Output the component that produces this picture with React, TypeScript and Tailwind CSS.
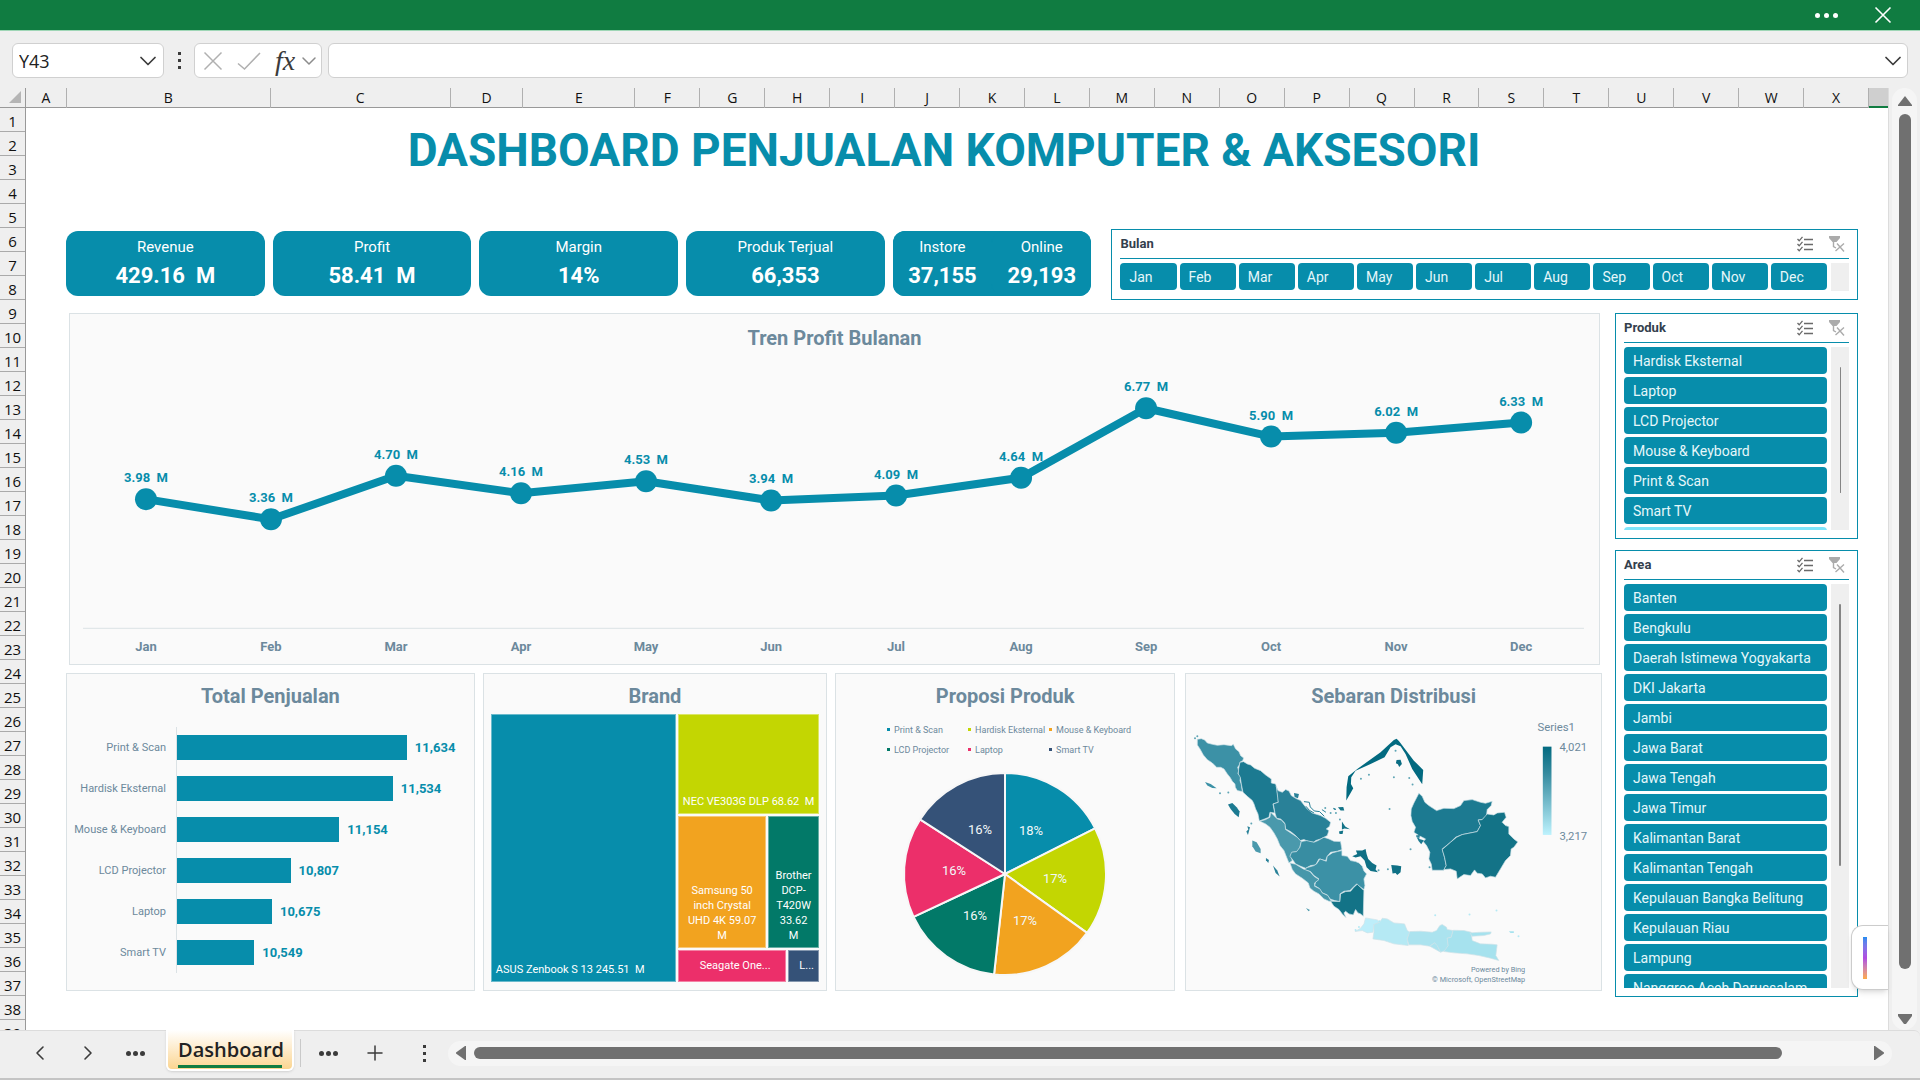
import { useState } from "react";
import { ChevronDown, ChevronLeft, ChevronRight, Plus } from "lucide-react";
import { clsx } from "clsx";

const columns = "ABCDEFGHIJKLMNOPQRSTUVWX".split("");
const rows = Array.from({ length: 39 }, (_, i) => i + 1);

const kpis = [
  { label: "Revenue", value: "429.16  M" },
  { label: "Profit", value: "58.41  M" },
  { label: "Margin", value: "14%" },
  { label: "Produk Terjual", value: "66,353" },
];

const months = ["Jan", "Feb", "Mar", "Apr", "May", "Jun", "Jul", "Aug", "Sep", "Oct", "Nov", "Dec"];
const profit = [3.98, 3.36, 4.7, 4.16, 4.53, 3.94, 4.09, 4.64, 6.77, 5.9, 6.02, 6.33];

const products = ["Hardisk Eksternal", "Laptop", "LCD Projector", "Mouse & Keyboard", "Print & Scan", "Smart TV"];

const areas = [
  "Banten",
  "Bengkulu",
  "Daerah Istimewa Yogyakarta",
  "DKI Jakarta",
  "Jambi",
  "Jawa Barat",
  "Jawa Tengah",
  "Jawa Timur",
  "Kalimantan Barat",
  "Kalimantan Tengah",
  "Kepulauan Bangka Belitung",
  "Kepulauan Riau",
  "Lampung",
  "Nanggroe Aceh Darussalam",
];

const sales = [
  { name: "Print & Scan", value: 11634, color: "#078dab", lx: 1031, ly: 831 },
  { name: "Hardisk Eksternal", value: 11534, color: "#c3d602", lx: 1055, ly: 879 },
  { name: "Mouse & Keyboard", value: 11154, color: "#f2a31f", lx: 1025, ly: 921 },
  { name: "LCD Projector", value: 10807, color: "#027968", lx: 975, ly: 916 },
  { name: "Laptop", value: 10675, color: "#ec2f6a", lx: 954, ly: 871 },
  { name: "Smart TV", value: 10549, color: "#355278", lx: 980, ly: 830 },
];

const provinces = [
  { fill: "#3c91a6", points: "50,241 62,239 72,243 80,252 95,256 110,259 130,257 152,260 158,256 165,270 175,278 180,290 189,297 186,305 178,310 176,318 171,325 174,335 172,345 180,352 178,365 182,375 185,398 170,395 164,385 163,375 155,367 148,355 140,345 130,330 120,325 108,325 95,312 80,302 68,288 58,270 50,258" },
  { fill: "#1c7a91", points: "189,308 200,315 210,318 222,328 240,335 255,348 272,360 272,372 285,375 289,390 292,415 293,430 277,435 280,450 282,462 268,460 265,475 252,480 236,486 232,465 225,450 220,435 215,425 200,412 187,400 182,375 179,355 173,345 174,330 178,310" },
  { fill: "#298198", points: "287,382 292,395 305,400 315,392 325,396 332,410 345,418 360,425 370,438 380,450 395,462 420,470 435,478 450,490 447,502 437,510 445,515 440,530 430,535 420,540 405,545 400,550 385,548 370,542 358,545 345,530 330,518 315,510 312,492 300,480 288,478 283,462 280,445 278,435 293,430" },
  { fill: "#4a99ac", points: "238,487 255,482 268,475 270,460 280,470 290,480 302,483 313,495 315,512 335,525 350,535 362,548 358,565 350,578 335,580 330,590 335,605 325,612 318,595 310,575 298,560 290,540 280,522 268,505 255,495" },
  { fill: "#388da2", points: "362,548 378,545 400,550 412,545 430,535 445,540 460,547 480,548 484,572 470,577 450,580 440,592 435,605 415,600 405,618 390,620 375,628 360,622 345,615 338,605 328,592 333,580 348,578 358,565" },
  { fill: "#3c91a6", points: "484,575 484,590 500,592 510,605 525,608 535,612 545,622 550,636 558,645 550,660 553,680 550,692 540,685 528,675 518,685 508,695 490,697 478,705 478,728 462,725 448,720 440,708 425,702 415,688 402,680 405,670 415,660 400,650 390,638 370,632 380,626 400,620 408,615 418,600 437,607 440,592 455,582 470,578" },
  { fill: "#4797aa", points: "328,612 345,616 368,630 388,638 400,652 415,662 402,672 402,682 418,690 425,702 442,710 450,724 462,728 445,727 430,720 415,705 400,697 388,687 383,672 365,658 345,645 335,632" },
  { fill: "#137387", points: "450,727 478,728 480,705 495,698 510,697 520,685 530,676 545,690 550,695 548,772 540,765 532,762 525,752 518,768 505,765 495,757 490,762 496,776 485,765 475,752 460,742" },
  { fill: "#1c7a91", points: "715,403 725,412 733,430 745,440 768,455 790,448 820,449 840,440 850,425 875,422 900,430 915,433 935,427 932,440 920,452 918,470 905,482 893,483 900,500 890,518 865,523 845,527 825,535 810,550 785,570 792,595 797,620 790,634 755,634 752,615 745,600 748,580 738,560 728,548 735,540 715,530 700,520 705,505 695,488 691,470 692,450 700,432" },
  { fill: "#137387", points: "920,465 940,468 950,462 972,460 977,475 965,490 975,500 985,503 985,525 1000,540 1012,549 1000,565 992,570 990,590 975,605 960,630 945,655 930,652 915,657 905,645 890,643 882,633 870,650 850,647 830,660 827,637 810,630 790,632 797,620 792,595 785,572 810,550 828,535 845,527 865,523 890,518 900,500 893,483 905,482" },
  { fill: "#bdeefa", points: "555,777 590,783 598,790 580,797 577,820 560,822 545,815 523,818 540,808 550,795" },
  { fill: "#b5e9f4", points: "598,790 605,778 620,780 640,792 672,795 680,815 688,820 680,838 683,860 640,855 610,845 577,840 580,820 580,797" },
  { fill: "#abe3ef", points: "688,818 720,817 755,820 768,815 778,800 785,797 798,805 800,812 818,815 812,835 800,838 803,860 795,875 780,880 762,852 748,862 720,858 685,858 680,840" },
  { fill: "#abe3ef", points: "748,862 762,852 770,860 780,880" },
  { fill: "#a6e2ee", points: "818,814 850,815 872,820 875,845 900,855 935,856 950,858 946,890 955,905 930,898 895,890 860,885 820,882 790,878 803,860 800,838 812,835" },
  { fill: "#a6e2ee", points: "868,822 900,820 932,819 930,825 910,830 875,832" },
];

const islands = [
  { fill: "#3c91a6", points: "73,369 90,375 108,388 95,387 80,380" },
  { fill: "#1c7a91", points: "142,437 155,432 168,445 177,458 174,475 162,465 150,450" },
  { fill: "#4a99ac", points: "215,545 228,550 240,570 240,583 225,578 215,562" },
  { fill: "#298198", points: "200,502 208,505 202,528 197,518 203,512" },
  { fill: "#298198", points: "256,597 265,603 263,612 256,604" },
  { fill: "#298198", points: "277,620 290,635 297,653 285,642" },
  { fill: "#4797aa", points: "376,747 388,753 384,757" },
  { fill: "#298198", points: "340,402 355,405 352,418 342,414" },
  { fill: "#137387", points: "472,445 488,444 491,455 480,455" },
  { fill: "#137387", points: "475,518 488,515 486,525 477,525" },
  { fill: "#137387", points: "484,488 494,503 508,511 492,509 484,512" },
  { fill: "#026a80", points: "497,425 498,385 503,352 530,330 600,280 640,243 648,239 655,246 700,305 728,333 725,376 695,330 675,285 660,262 645,256 630,265 612,295 570,315 525,335 512,355 511,375 518,388 510,402" },
  { fill: "#0b6d83", points: "648,303 660,302 664,315 656,324 652,316 646,313" },
  { fill: "#0f7085", points: "515,592 530,585 526,575 545,575 555,570 558,585 563,600 575,612 588,620 585,632 592,640 570,636 558,625 552,605 540,592 525,596" },
  { fill: "#0f7085", points: "632,618 650,620 662,622 660,640 650,648 645,642 636,644 634,630" },
  { fill: "#1c7a91", points: "706,530 718,528 716,540 730,544 722,556 714,546" },
  { fill: "#a6e2ee", points: "985,817 1000,817 1000,822 990,822" },
];

const specks = [
  [50, 232], [43, 238], [143, 401], [118, 403], [212, 494], [541, 359], [565, 347], [686, 357], [696, 377], [640, 355],
  [645, 275], [627, 450], [690, 571], [622, 631], [594, 634], [462, 450], [466, 462], [478, 482], [434, 447], [450, 462],
  [535, 804], [597, 787], [525, 813], [764, 769], [867, 767], [948, 755], [1014, 832], [747, 625], [712, 536],
];

const slicePath = (from: number, to: number) => {
  const total = sales.reduce((a, s) => a + s.value, 0);
  const at = (v: number) => {
    const t = (v / total) * Math.PI * 2;
    return `${1005 + 101 * Math.sin(t)} ${874 - 101 * Math.cos(t)}`;
  };
  return `M1005 874 L${at(from)} A101 101 0 0 1 ${at(to)} Z`;
};

function Dots({ vertical = false, wide = false }: { vertical?: boolean; wide?: boolean }) {
  return (
    <span
      className={clsx("flex items-center justify-center", vertical ? "flex-col gap-1" : wide ? "gap-1" : "gap-0.5")}
    >
      {[0, 1, 2].map((i) => (
        <span key={i} className={clsx("bg-current", vertical ? "size-[3px]" : "size-[5px] rounded-full")} />
      ))}
    </span>
  );
}

function TitleBar() {
  return (
    <header className="flex h-[31px] shrink-0 items-center justify-end gap-8 border-b border-[#9fd6b6] bg-[#107c41] pr-7 text-white">
      <button aria-label="More options" className="w-8">
        <Dots wide />
      </button>
      <button aria-label="Close">
        <svg className="size-[18px]" viewBox="0 0 18 18" stroke="currentColor" strokeWidth="1.6">
          <path d="M1.5 1.5 16.5 16.5M16.5 1.5 1.5 16.5" />
        </svg>
      </button>
    </header>
  );
}

function FormulaBar() {
  const [cell, setCell] = useState("Y43");
  const box = "flex h-[35px] items-center rounded-md border border-[#d0d0d0] bg-white";
  return (
    <div className="flex h-[57px] shrink-0 gap-1.5 pt-3 pr-3 pl-3 text-[#3b3b3b]">
      <div className={clsx(box, "w-[152px] pr-px pl-1.5")}>
        <input
          aria-label="Name box"
          value={cell}
          onChange={(e) => setCell(e.target.value)}
          className="w-full min-w-0 bg-transparent font-['Open_Sans',sans-serif] text-lg text-[#222] outline-none"
        />
        <button aria-label="Show names">
          <ChevronDown className="size-7" strokeWidth={1.5} />
        </button>
      </div>
      <div className="flex h-[35px] w-[18px] items-center justify-center">
        <Dots vertical />
      </div>
      <div className={clsx(box, "w-[128px] pl-2 text-[#b0b0b0]")}>
        <button aria-label="Cancel">
          <svg className="size-5" viewBox="0 0 20 20" stroke="currentColor" strokeWidth="1.5">
            <path d="M1.5 1.5 18.5 18.5M18.5 1.5 1.5 18.5" />
          </svg>
        </button>
        <button aria-label="Enter" className="ml-3.5">
          <svg className="h-5 w-6" viewBox="0 0 24 20" fill="none" stroke="currentColor" strokeWidth="1.5">
            <path d="M1 12.5 7.5 18 23 2" />
          </svg>
        </button>
        <button
          aria-label="Insert function"
          className="ml-3.5 font-['Liberation_Serif',serif] text-[28px] leading-7 text-[#3b3b3b] italic"
        >
          fx
        </button>
        <ChevronDown className="ml-0.5 size-6 shrink-0 text-[#8c8c8c]" strokeWidth={1.5} />
      </div>
      <div className={clsx(box, "flex-1")}>
        <input aria-label="Formula" className="w-full bg-transparent px-2 outline-none" />
        <button aria-label="Expand formula bar">
          <ChevronDown className="size-7" strokeWidth={1.5} />
        </button>
      </div>
    </div>
  );
}

function ColumnHeaders() {
  return (
    <div className="flex h-5 shrink-0 border-b border-[#999] font-['Open_Sans',sans-serif] text-sm text-[#111]">
      <div className="flex w-[26px] items-end justify-end border-r border-[#999] pr-1 pb-1">
        <svg className="size-3" viewBox="0 0 12 12" fill="#b5b5b5">
          <path d="M12 0v12H0z" />
        </svg>
      </div>
      <div className="grid flex-1 grid-cols-[41fr_204fr_180fr_73fr_112fr_repeat(19,65fr)_19fr]">
        {columns.map((c) => (
          <div key={c} className="border-r border-[#b0b0b0] text-center leading-5">
            {c}
          </div>
        ))}
        <div className="border-b-2 border-[#107c41] bg-[#cfcfcf]" />
      </div>
    </div>
  );
}

function RowHeaders() {
  return (
    <div className="w-[26px] shrink-0 border-r border-[#999] font-['Open_Sans',sans-serif] text-[15px] text-[#111]">
      {rows.map((r) => (
        <div key={r} className="h-6 border-b border-[#aaa] pt-px text-center leading-6">
          {r}
        </div>
      ))}
    </div>
  );
}

function KpiCard({ label, value }: { label: string; value: string }) {
  return (
    <div className="flex flex-1 flex-col items-center rounded-xl bg-[#078dab] pt-1.5 text-white">
      <span className="text-[15px] leading-5">{label}</span>
      <span className="mt-[5px] text-[22px] leading-7 font-bold whitespace-pre">{value}</span>
    </div>
  );
}

function Slicer({
  title,
  items,
  horizontal = false,
  partial = false,
  thumb,
  className,
}: {
  title: string;
  items: string[];
  horizontal?: boolean;
  partial?: boolean;
  thumb?: string;
  className?: string;
}) {
  return (
    <section className={clsx("flex min-w-0 flex-col border border-[#078dab] bg-white px-2 pb-2", className)}>
      <div className="flex h-[29px] shrink-0 items-center border-b border-[#078dab]">
        <h2 className="flex-1 text-[13px] font-bold text-[#33404d]">{title}</h2>
        <button aria-label={`Multi-select ${title}`} className="mr-4">
          <svg className="size-4" viewBox="0 0 16 16" fill="none" stroke="#6a6a6a" strokeWidth="1.3">
            <path d="M7 3.5h9M7 8.5h9M7 13.5h9M.5 3 2.2 4.8 5.5.8M.5 8 2.2 9.8 5.5 5.8M.5 13l1.700 1.800L5.500 10.800" />
          </svg>
        </button>
        <button aria-label={`Clear filter ${title}`} className="mr-1">
          <svg className="size-4" viewBox="0 0 16 16" fill="none" stroke="#ababab" strokeWidth="1.4">
            <path d="M0 0h11v2L7.5 6H3.5L0 2z" fill="#ababab" stroke="none" />
            <path d="M4.5 5v5.5l2.5 1.500M6.500 15 15 7.500M8 7.500l7 8" />
          </svg>
        </button>
      </div>
      <div className="mt-1 flex min-h-0 flex-1 gap-1">
        <div className={clsx("flex min-w-0 flex-1 gap-[3px] overflow-hidden", !horizontal && "flex-col")}>
          {items.map((item) => (
            <button
              key={item}
              className={clsx(
                "h-[27px] shrink-0 truncate rounded bg-[#078dab] px-[9px] text-left text-sm text-[#e6f7fa]",
                horizontal && "flex-1"
              )}
            >
              {item}
            </button>
          ))}
          {partial && <button aria-label="(blank)" className="h-[27px] shrink-0 rounded bg-[#7fe5fa]" />}
        </div>
        <div className="flex w-[18px] justify-center bg-[#efefef]">
          {thumb && <div className={clsx("rounded bg-[#858585]", thumb)} />}
        </div>
      </div>
    </section>
  );
}

function Panel({ title, className, children }: { title: string; className?: string; children: React.ReactNode }) {
  return (
    <section className={clsx("flex min-w-0 flex-col border border-[#dbe2e5] bg-[#fafafa] pt-2 text-[#6c899c]", className)}>
      <h2 className="text-center text-[20px] leading-7 font-bold">{title}</h2>
      {children}
    </section>
  );
}

function TrendChart() {
  const pts = profit.map((v, i) => ({ x: 76 + i * 125.1, y: 277 - v * 32.6, v }));
  return (
    <Panel title="Tren Profit Bulanan" className="mr-0.5 ml-[3px] pt-2.5">
      <svg className="block w-full" viewBox="0 0 1530 312">
        <path d="M13 276.5H1515" stroke="#dbe2e5" />
        <polyline
          points={pts.map((p) => `${p.x},${p.y}`).join(" ")}
          fill="none"
          stroke="#078dab"
          strokeWidth="8"
          strokeLinejoin="round"
        />
        {pts.map((p, i) => (
          <g key={months[i]} textAnchor="middle" fontSize="13" fontWeight="700">
            <circle cx={p.x} cy={p.y} r="11" fill="#078dab" />
            <text x={p.x} y={p.y - 17} fill="#078dab" className="whitespace-pre">
              {`${p.v.toFixed(2)}  M`}
            </text>
            <text x={p.x} y="299" fill="#6c899c">
              {months[i]}
            </text>
          </g>
        ))}
      </svg>
    </Panel>
  );
}

function SalesBars() {
  return (
    <Panel title="Total Penjualan" className="flex-[409]">
      <div className="mt-[17px] flex">
        <div className="flex w-[109px] flex-col gap-4 py-2 pr-2.5 text-right text-[11px]">
          {sales.map((s) => (
            <span key={s.name} className="leading-[25px] whitespace-nowrap">
              {s.name}
            </span>
          ))}
        </div>
        <div className="flex flex-1 flex-col gap-4 border-l border-[#dbe2e5] py-2">
          {sales.map((s) => (
            <div key={s.name} className="flex h-[25px] items-center gap-2">
              <div className="h-full bg-[#078dab]" style={{ width: `${((s.value - 10000) / 2110) * 100}%` }} />
              <span className="text-[13px] font-bold text-[#078dab]">{s.value.toLocaleString("en-US")}</span>
            </div>
          ))}
        </div>
      </div>
    </Panel>
  );
}

function BrandTreemap() {
  const tile = "flex min-w-0 items-end border border-white/40 text-[11px] leading-[15px] text-white";
  return (
    <Panel title="Brand" className="flex-[344]">
      <div className="mx-[7px] mt-1 mb-2 flex flex-1 gap-0.5">
        <div className={clsx(tile, "flex-[173] bg-[#078dab] p-1 whitespace-pre")}>ASUS Zenbook S 13 245.51  M</div>
        <div className="flex min-w-0 flex-[139] flex-col gap-0.5">
          <div className={clsx(tile, "flex-[94] justify-center bg-[#c3d602] pb-1 whitespace-pre")}>
            NEC VE303G DLP 68.62  M
          </div>
          <div className="flex flex-[133] gap-0.5">
            <div className={clsx(tile, "w-[88px] justify-center bg-[#f2a31f] pb-1 text-center")}>
              Samsung 50
              <br />
              inch Crystal
              <br />
              UHD 4K 59.07
              <br />M
            </div>
            <div className={clsx(tile, "flex-1 justify-center bg-[#027968] pb-1 text-center")}>
              Brother
              <br />
              DCP-
              <br />
              T420W
              <br />
              33.62
              <br />M
            </div>
          </div>
          <div className="flex h-8 gap-0.5">
            <div className={clsx(tile, "w-[108px] justify-center bg-[#ec2f6a] pb-2 pl-1.5")}>Seagate One...</div>
            <div className={clsx(tile, "flex-1 justify-end bg-[#355278] pr-1 pb-2")}>L...</div>
          </div>
        </div>
      </div>
    </Panel>
  );
}

function ProductPie() {
  let acc = 0;
  return (
    <Panel title="Proposi Produk" className="flex-[340]">
      <ul className="mx-auto mt-2.5 grid grid-cols-[81px_81px_auto] pl-2 text-[9px] leading-5">
        {sales.map((s) => (
          <li key={s.name} className="flex items-center gap-1 whitespace-nowrap">
            <svg className="size-[3px] shrink-0" viewBox="0 0 3 3" fill={s.color}>
              <rect width="3" height="3" />
            </svg>
            {s.name}
          </li>
        ))}
      </ul>
      <svg className="mx-auto mt-2.5 block w-[208px]" viewBox="901 770 208 208">
        {sales.map((s) => {
          const from = acc;
          acc += s.value;
          return (
            <path key={s.name} d={slicePath(from, acc)} fill={s.color} stroke="#f7f7f7" strokeWidth="2" strokeLinejoin="round" />
          );
        })}
        {sales.map((s, i) => (
          <text key={s.name} x={s.lx} y={s.ly + 4} fontSize="13" fill="#f2f8f9" textAnchor="middle">
            {["18%", "17%", "17%", "16%", "16%", "16%"][i]}
          </text>
        ))}
      </svg>
    </Panel>
  );
}

function DistributionMap() {
  return (
    <Panel title="Sebaran Distribusi" className="ml-0.5 flex-[417]">
      <svg className="-mt-1.5 block w-full" viewBox="16 135 1245 860">
        <defs>
          <linearGradient id="scale" x2="0" y2="1">
            <stop offset="0" stopColor="#026a80" />
            <stop offset="0.3" stopColor="#348a9e" />
            <stop offset="1" stopColor="#bdf2fd" />
          </linearGradient>
        </defs>
        {provinces.map((p) => (
          <polygon key={p.points} points={p.points} fill={p.fill} stroke="#cfe3e8" strokeWidth="2" strokeLinejoin="round" />
        ))}
        {islands.map((p) => (
          <polygon key={p.points} points={p.points} fill={p.fill} />
        ))}
        {specks.map(([x, y]) => (
          <circle key={`${x}-${y}`} cx={x} cy={y} r="3" fill={y > 750 ? "#b5e9f4" : "#5fa5b5"} />
        ))}
        <path
          d="M370 428 l16 2 3 14 12 12 16 2 14 14 M376 442l10 12 14 8 M424 452l12 8 M458 448l8 4"
          fill="none"
          stroke="#298198"
          strokeWidth="3"
        />
        <rect x="1087" y="263" width="26" height="265" fill="url(#scale)" />
        <g fill="#6c899c" fontSize="34">
          <text x="1071" y="216">Series1</text>
          <text x="1137" y="276">4,021</text>
          <text x="1137" y="543">3,217</text>
        </g>
        <g fill="#6c899c" fontSize="22" textAnchor="end">
          <text x="1034" y="939">Powered by Bing</text>
          <text x="1034" y="969">© Microsoft, OpenStreetMap</text>
        </g>
      </svg>
    </Panel>
  );
}

function VerticalScrollbar() {
  return (
    <div className="mr-[3px] ml-[3px] flex w-[25px] shrink-0 flex-col items-center rounded-full bg-[#f5f5f5] pt-2 pb-1.5">
      <svg className="h-2.5 w-3.5" viewBox="0 0 14 10" fill="#707070">
        <path d="M7 0 14 9v1H0V9z" />
      </svg>
      <div className="mt-2 flex w-full flex-1 justify-center">
        <div className="h-[95%] w-3 rounded-full bg-[#707070]" />
      </div>
      <svg className="h-2.5 w-3.5" viewBox="0 0 14 10" fill="#707070">
        <path d="M0 0h14v2L8 10H6L0 2z" />
      </svg>
    </div>
  );
}

function SheetTabs() {
  return (
    <footer className="flex h-[50px] shrink-0 items-start border-b-2 border-[#c4c4c4] text-[#3b3b3b]">
      <div className="flex h-[45px] flex-1 items-center rounded-tr-md border-t border-[#dcdcdc] pl-7">
        <button aria-label="Previous sheet">
          <ChevronLeft className="size-6" strokeWidth={1.6} />
        </button>
        <button aria-label="Next sheet" className="ml-6">
          <ChevronRight className="size-6" strokeWidth={1.6} />
        </button>
        <button aria-label="All sheets" className="ml-6 w-[22px]">
          <Dots />
        </button>
        <button className="-mt-px ml-5 h-[41px] w-32 self-start rounded-b-md border-2 border-t-0 border-white bg-gradient-to-b from-white to-[#fbd590] px-2.5 pt-1 font-['Open_Sans',sans-serif] text-xl font-semibold text-[#222] shadow-sm">
          <span className="block border-b-[3px] border-[#107c41] leading-[30px]">Dashboard</span>
        </button>
        <div className="ml-1.5 h-7 w-px bg-[#c9c9c9]" />
        <button aria-label="More sheets" className="ml-4 w-[22px]">
          <Dots />
        </button>
        <button aria-label="New sheet" className="ml-6">
          <Plus className="size-6" strokeWidth={1.5} />
        </button>
        <div className="ml-9">
          <Dots vertical />
        </div>
        <div className="mr-7 ml-[22px] flex h-[25px] flex-1 items-center rounded-full bg-[#f5f5f5] px-2">
          <svg className="h-3.5 w-2.5" viewBox="0 0 10 14" fill="#707070">
            <path d="M10 0v14H9L0 7.500v-1L9 0z" />
          </svg>
          <div className="mx-2 flex-1">
            <div className="h-3 w-[94%] rounded-full bg-[#707070]" />
          </div>
          <svg className="h-3.5 w-2.5" viewBox="0 0 10 14" fill="#707070">
            <path d="M0 0v14h1L10 7.500v-1L1 0z" />
          </svg>
        </div>
      </div>
    </footer>
  );
}

export default function App() {
  return (
    <div className="flex h-screen flex-col overflow-hidden bg-[#efefef] font-[Roboto,sans-serif]">
      <TitleBar />
      <FormulaBar />
      <div className="flex min-h-0 flex-1">
        <div className="relative flex min-w-0 flex-1 flex-col border-r border-[#dcdcdc]">
          <ColumnHeaders />
          <div className="flex min-h-0 flex-1 overflow-hidden">
            <RowHeaders />
            <main className="min-w-0 flex-1 bg-white pt-[18px] pr-[30px] pl-10">
              <h1 className="pr-9 text-center text-[46px] leading-[48px] font-bold text-[#078dab]">
                DASHBOARD PENJUALAN KOMPUTER &amp; AKSESORI
              </h1>

              <div className="mt-[55px] grid grid-cols-[1026fr_747fr] gap-5">
                <div className="mt-0.5 mb-1 flex gap-2">
                  {kpis.map((k) => (
                    <KpiCard key={k.label} {...k} />
                  ))}
                  <div className="flex flex-1 rounded-xl bg-[#078dab]">
                    <KpiCard label="Instore" value="37,155" />
                    <KpiCard label="Online" value="29,193" />
                  </div>
                </div>
                <Slicer title="Bulan" items={months} horizontal className="h-[71px]" />
              </div>

              <div className="mt-[13px] flex gap-[13px]">
                <div className="flex min-w-0 flex-1 flex-col gap-2">
                  <TrendChart />
                  <div className="flex gap-2">
                    <SalesBars />
                    <BrandTreemap />
                    <ProductPie />
                    <DistributionMap />
                  </div>
                </div>
                <aside className="flex w-[243px] shrink-0 flex-col gap-[11px]">
                  <Slicer title="Produk" items={products} partial thumb="mt-5 h-[126px] w-px" className="h-[226px]" />
                  <Slicer title="Area" items={areas} thumb="mt-5 h-[262px] w-0.5" className="h-[447px]" />
                </aside>
              </div>
            </main>
          </div>
          <button
            aria-label="Open assistant"
            className="absolute right-0 bottom-10 flex h-[65px] w-[37px] items-center rounded-l-xl border border-r-0 border-[#ccc] bg-white pl-[11px] shadow-md"
          >
            <span className="h-[42px] w-1 bg-gradient-to-b from-[#1a8cf0] via-[#b04be0] to-[#ffab3f]" />
          </button>
        </div>
        <VerticalScrollbar />
      </div>
      <SheetTabs />
    </div>
  );
}
